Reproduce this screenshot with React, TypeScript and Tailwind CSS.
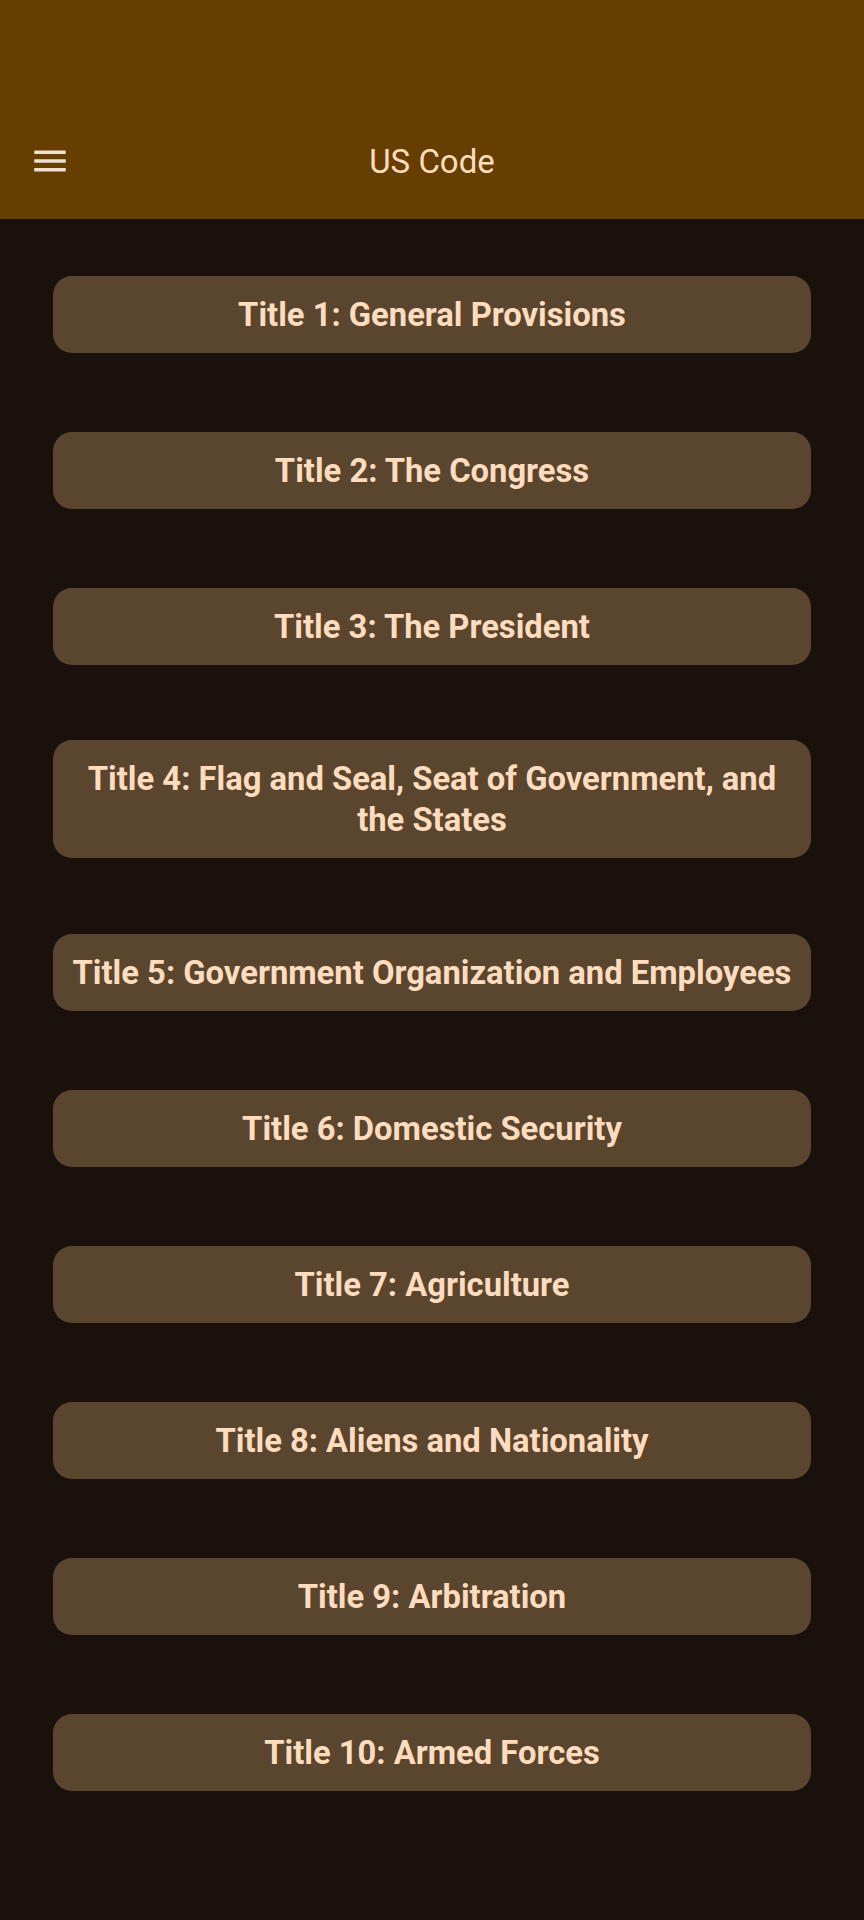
import React from "react";

const titles = [
  "Title 1: General Provisions",
  "Title 2: The Congress",
  "Title 3: The President",
  "Title 4: Flag and Seal, Seat of Government, and the States",
  "Title 5: Government Organization and Employees",
  "Title 6: Domestic Security",
  "Title 7: Agriculture",
  "Title 8: Aliens and Nationality",
  "Title 9: Arbitration",
  "Title 10: Armed Forces",
];

export default function App() {
  return (
    <div
      className="min-h-[1920px] w-full bg-[#1a110d]"
      style={{ fontFamily: "Roboto, 'Noto Sans', sans-serif" }}
    >
      <header className="bg-[#663e00] pt-[103px]">
        <div className="relative flex h-[116px] items-center justify-center">
          <button className="absolute left-[29px] top-1/2 -translate-y-1/2 flex h-[42px] w-[42px] items-center justify-center">
            <svg width="42" height="42" viewBox="0 0 24 24" fill="#efe0d2">
              <rect x="3" y="6" width="18" height="2" rx="0.3" />
              <rect x="3" y="11" width="18" height="2" rx="0.3" />
              <rect x="3" y="16" width="18" height="2" rx="0.3" />
            </svg>
          </button>
          <h1 className="mt-[2px] text-[33px] font-normal leading-[40px] text-[#ffdcbe]">US Code</h1>
        </div>
      </header>
      <main className="flex flex-col pt-[17px]">
        {titles.map((t) => (
          <div key={t} className="flex min-h-[156px] items-center py-[36px]">
            <div className="mx-[53px] flex w-full items-center justify-center rounded-[19px] bg-[#5a462e] px-[16px] pt-[19px] pb-[17px]">
              <span className="text-center text-[32.75px] font-bold leading-[41px] text-[#ffdcbe]">{t}</span>
            </div>
          </div>
        ))}
      </main>
    </div>
  );
}
